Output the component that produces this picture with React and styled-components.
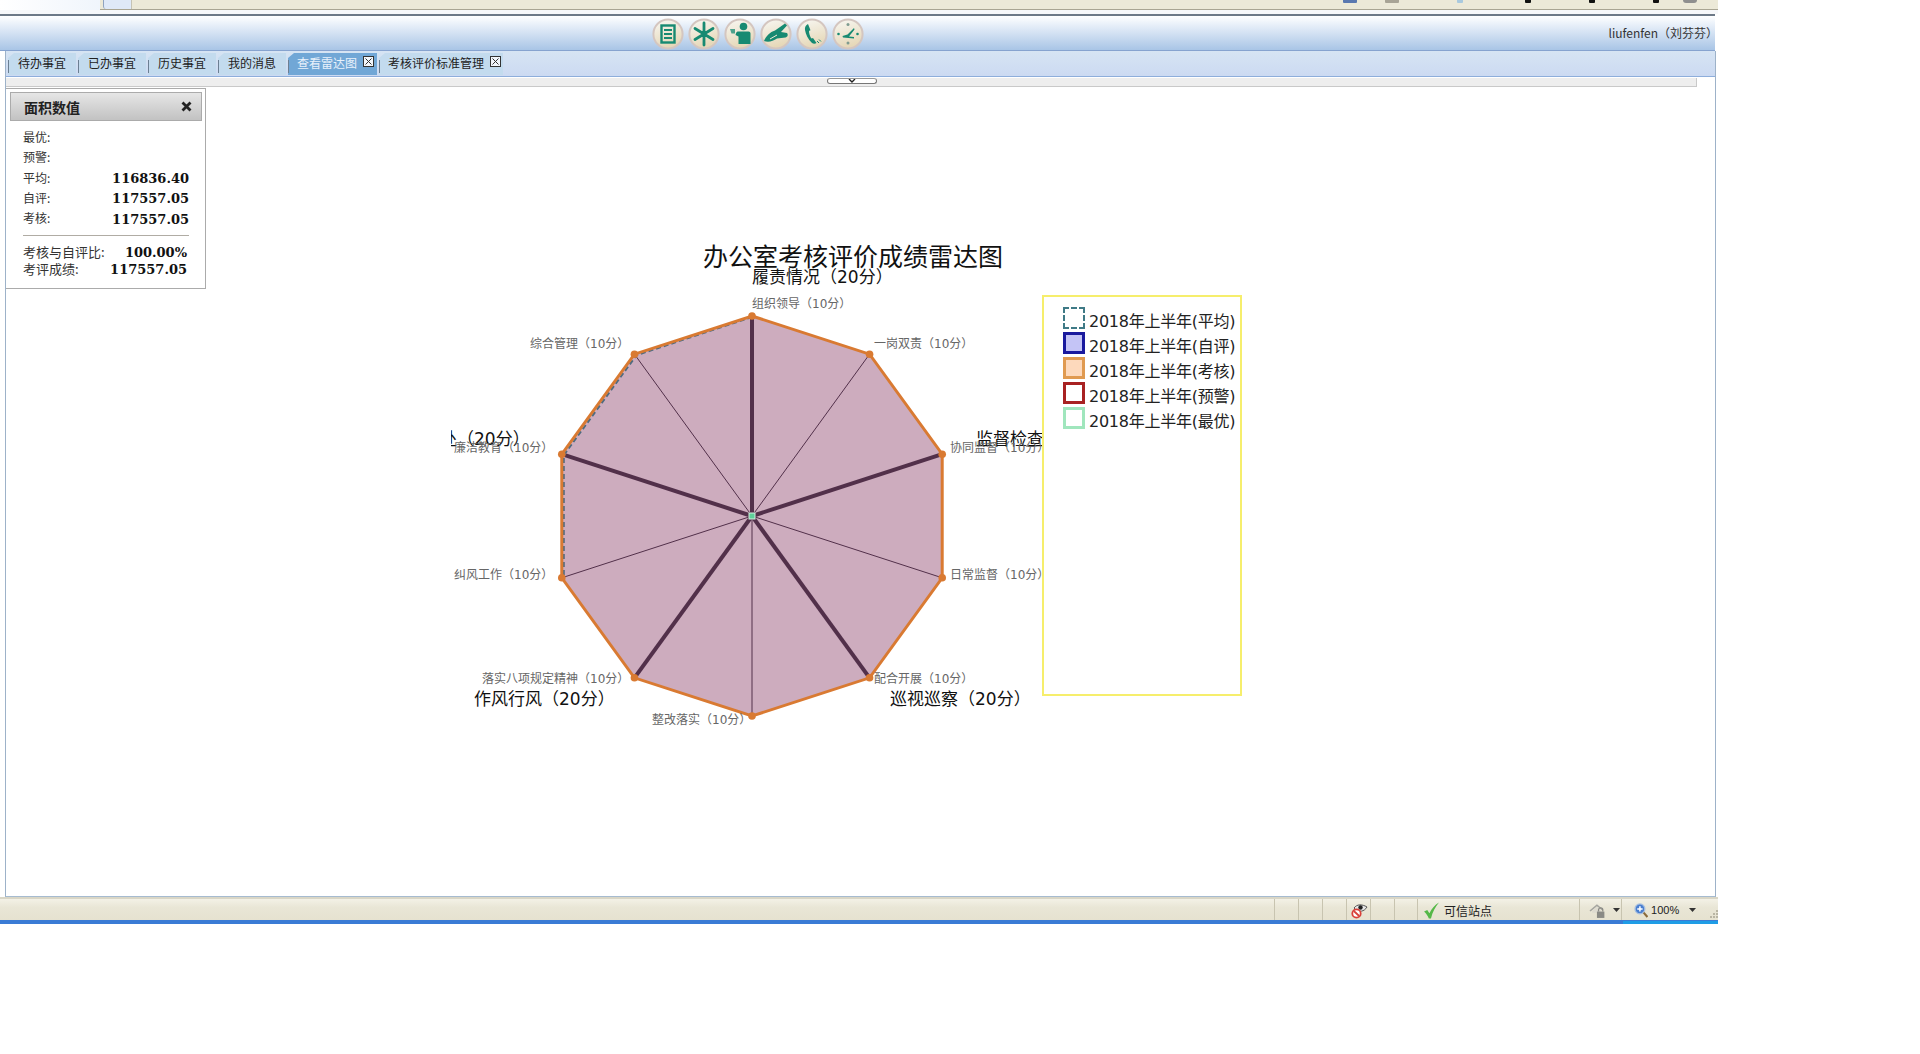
import React from "react";
import styled, { createGlobalStyle } from "styled-components";

const Global = createGlobalStyle`
  html, body { margin: 0; padding: 0; background: #fff; }
  body { font-family: "Noto Sans CJK SC", "Liberation Sans", sans-serif; font-size: 12px; color: #222; }
`;

const Page = styled.div`
  width: 1718px;
  height: 924px;
  display: flex;
  flex-direction: column;
  background: #fff;
`;

const TopStrip = styled.div`
  height: 9px;
  display: flex;
  background: #ece9d8;
  border-bottom: 1px solid #a9a593;
`;
const StripBlank = styled.div`
  width: 100px;
  height: 10px;
  background: linear-gradient(90deg, #fff, #f0f5fc);
`;
const StripTab = styled.div`
  width: 27px;
  height: 9px;
  margin-left: 3px;
  background: #dfe9f8;
  border-left: 1px solid #8fa3c0;
  border-right: 1px solid #c5c3b5;
  border-radius: 0 0 0 3px;
`;
const StripGlyph = styled.div`
  width: ${(p) => p.$w}px;
  height: 3px;
  margin-left: ${(p) => p.$gap}px;
  background: ${(p) => p.$c};
  border-radius: 0 0 ${(p) => (p.$round ? 7 : 1)}px ${(p) => (p.$round ? 7 : 1)}px;
`;
const StripGap = styled.div`
  height: 4px;
  background: #f7f8fa;
`;

const Toolbar = styled.div`
  height: 34px;
  margin-right: 3px;
  padding-left: 652px;
  display: flex;
  align-items: center;
  border-top: 2px solid #6d7987;
  border-bottom: 1px solid #86a3cf;
  background: linear-gradient(180deg, #ffffff 0%, #e4edf8 30%, #a9c5e6 100%);
`;
const ToolIcons = styled.div`
  display: flex;
  gap: 4px;
  margin-top: 2px;
`;
const UserName = styled.div`
  margin-left: auto;
  margin-right: -3px;
  margin-top: -1px;
  font-size: 12px;
  color: #333;
  white-space: nowrap;
`;

const Frame = styled.div`
  flex: 1;
  min-height: 0;
  margin-right: 2px;
  display: flex;
  flex-direction: column;
  border-left: 1px solid #9db2c9;
  border-right: 1px solid #9db2c9;
  border-bottom: 1px solid #a6bbd0;
  margin-left: 5px;
`;

const TabBar = styled.div`
  height: 23px;
  padding: 2px 0 0 2px;
  display: flex;
  gap: 2px;
  background: linear-gradient(180deg, #d6e4f3, #ccdaf2);
  border-bottom: 1px solid #8eaedb;
`;
const Tab = styled.div`
  position: relative;
  box-sizing: border-box;
  height: 22px;
  padding: 0 0 3px ${(p) => (p.$close ? 9 : 10)}px;
  width: ${(p) => p.$w}px;
  display: flex;
  align-items: center;
  font-size: 12px;
  color: ${(p) => (p.$active ? "#e8f1fb" : "#222")};
  background: ${(p) => (p.$active ? "#71a7d6" : "#c3dbee")};
  clip-path: polygon(6px 0, 100% 0, 100% 100%, 0 100%, 0 5px);
  &::before {
    content: "";
    position: absolute;
    left: 0;
    top: 7px;
    bottom: 2px;
    width: 1px;
    background: #6c7f92;
  }
`;
const TabClose = styled.svg`
  width: 11px;
  height: 11px;
  margin-left: 6px;
  margin-top: -2px;
  flex: none;
`;

const CollapseBar = styled.div`
  position: relative;
  height: 8px;
  margin-top: 1px;
  margin-right: 18px;
  background: #eeeeee;
  border-bottom: 1px solid #c9c9c9;
  border-right: 1px solid #c9c9c9;
`;
const Grabber = styled.div`
  position: absolute;
  left: 821px;
  top: 0;
  width: 48px;
  height: 4px;
  background: #fff;
  border: 1px solid #777;
  border-top-color: #999;
  border-radius: 3px;
  display: flex;
  justify-content: center;
`;

const Content = styled.div`
  flex: 1;
  min-height: 0;
  display: flex;
  align-items: flex-start;
  background: #fff;
`;

const Panel = styled.div`
  flex: none;
  box-sizing: border-box;
  width: 200px;
  height: 201px;
  margin-top: 1px;
  padding: 3px 3px 0 4px;
  border: 1px solid #ababab;
  border-left: none;
  background: #fff;
`;
const PanelHead = styled.div`
  box-sizing: border-box;
  height: 29px;
  padding: 0 9px 0 13px;
  display: flex;
  align-items: center;
  justify-content: space-between;
  background: linear-gradient(180deg, #e6e6e6, #c2c2c2);
  border: 1px solid #ababab;
  font-size: 14px;
  font-weight: 700;
  color: #222;
`;
const PanelBody = styled.div`
  padding: 7px 13px 0 13px;
`;
const Row = styled.div`
  height: ${(p) => (p.$tight ? 17 : 20.25)}px;
  padding-right: ${(p) => (p.$tight ? 2 : 0)}px;
  display: flex;
  align-items: center;
  justify-content: space-between;
  font-size: ${(p) => (p.$tight ? 13 : 12)}px;
  color: #333;
`;
const RowLabel = styled.span`
  margin-top: -3px;
`;
const Val = styled.span`
  font-family: "DejaVu Serif", "Liberation Serif", serif;
  font-weight: 700;
  font-size: 13px;
  color: #111;
`;
const Rule = styled.div`
  height: 1px;
  margin: 6px 0 8px;
  background: #b0aca4;
`;

const ChartSvg = styled.svg`
  flex: none;
  display: block;
  width: 591px;
  height: 500px;
  margin: 154px 0 0 245px;
  overflow: hidden;
`;
const Legend = styled.div`
  flex: none;
  box-sizing: border-box;
  width: 200px;
  height: 401px;
  margin: 208px 0 0 0;
  padding: 10px 0 0 19px;
  border: 2px solid #f6ee6c;
  display: flex;
  flex-direction: column;
`;
const LegendRow = styled.div`
  height: 25px;
  display: flex;
  align-items: flex-start;
  gap: 4px;
`;
const Swatch = styled.div`
  box-sizing: border-box;
  width: 22px;
  height: 22px;
  flex: none;
  border: ${(p) => (p.$dash ? 2 : 3)}px ${(p) => (p.$dash ? "dashed" : "solid")} ${(p) => p.$line};
  background: ${(p) => p.$fill};
`;
const LegendText = styled.span`
  margin-top: 4px;
  font-family: "DejaVu Sans", "Noto Sans CJK SC", sans-serif;
  font-size: 16px;
  line-height: 22px;
  letter-spacing: -0.25px;
  color: #222;
  white-space: nowrap;
`;

const StatusBar = styled.div`
  height: 23px;
  margin-top: 0;
  box-sizing: border-box;
  display: flex;
  align-items: stretch;
  background: linear-gradient(180deg, #f3f1e6, #e9e6d6 40%, #e6e2d0);
  border-top: 2px solid #d9d6c6;
  font-size: 12px;
  color: #222;
`;
const Cell = styled.div`
  box-sizing: border-box;
  width: ${(p) => p.$w}px;
  flex: ${(p) => (p.$grow ? 1 : "none")};
  display: flex;
  align-items: center;
  gap: ${(p) => p.$gap || 0}px;
  padding-left: ${(p) => p.$pad || 0}px;
  padding-top: 1px;
  border-right: ${(p) => (p.$plain ? "none" : "1px solid #c8c4b0")};
  white-space: nowrap;
`;
const BlueLine = styled.div`
  height: 4px;
  display: flex;
  background: #3a7bd5;
`;
const BlueRight = styled.div`
  margin-left: 1623px;
  flex: 1;
  margin-top: 1px;
  background: #1f9de6;
`;
const ZoomLabel = styled.span`
  font-family: "Liberation Sans", sans-serif;
  font-size: 11px;
  color: #222;
`;
const ZoomCaret = styled.svg`
  margin-left: 10px;
  flex: none;
`;
const Grip = styled.svg`
  margin-left: auto;
  align-self: flex-end;
  flex: none;
`;

const TEAL = "#178a72";

const IconBase = ({ id, children }) => (
  <svg width="32" height="32" viewBox="0 0 32 32">
    <defs>
      <linearGradient id={id} x1="0" y1="0" x2="0.3" y2="1">
        <stop offset="0" stopColor="#f8f8f4" />
        <stop offset="1" stopColor="#e6d8b8" />
      </linearGradient>
    </defs>
    <circle cx="16" cy="16" r="14.6" fill={`url(#${id})`} stroke="#d4c6c0" strokeWidth="2" />
    {children}
  </svg>
);

const ToolGlyphs = [
  <IconBase id="g1" key="1">
    <rect x="9.5" y="7.5" width="13" height="17" fill="none" stroke={TEAL} strokeWidth="2.4" />
    <path d="M12 12h8M12 16h8M12 20h8" stroke={TEAL} strokeWidth="1.8" />
  </IconBase>,
  <IconBase id="g2" key="2">
    <path d="M16 16V5M16 16v11M16 16l-9-5.500M16 16l9-5.500M16 16l-9 5.500M16 16l9 5.500" stroke={TEAL} strokeWidth="2.800" strokeLinecap="round" />
    <circle cx="16" cy="16" r="2.600" fill={TEAL} />
  </IconBase>,
  <IconBase id="g3" key="3">
    <circle cx="19.500" cy="8.500" r="3.800" fill={TEAL} />
    <path d="M13.500 13.500h11c1.200 0 2 .8 2 2V26H14.500v-7.500l-3-1.500.8-2.500z" fill={TEAL} />
    <path d="M6 11h5v4.500H7.500z" fill={TEAL} opacity=".75" />
  </IconBase>,
  <IconBase id="g4" key="4">
    <path d="M4 23c2-5 6-9 11-10.500L25 5.500l2 2-6 6.500 6 1c1.500 2 .5 4-1.500 4.500L17 20.500c-4 3-9 4-13 2.500z" fill={TEAL} />
    <path d="M10 21l7-4" stroke="#f3ecd8" strokeWidth="1" />
  </IconBase>,
  <IconBase id="g5" key="5">
    <path d="M12 6c-2 1-3.500 3-3 6 .7 4.500 3 9 7 13 1.500 1 3 1 4.500 0l-3.500-5c-1 .5-1.500.5-2 0-1-2-2-4.500-2-6.500 0-.7.5-1 1.500-1.200z" fill={TEAL} />
    <path d="M21 23l2 2M23 21.500l2 2" stroke={TEAL} strokeWidth="1" />
  </IconBase>,
  <IconBase id="g6" key="6">
    <circle cx="16" cy="6.500" r="1.500" fill="#7f9c90" />
    <circle cx="16" cy="25" r="1.500" fill="#7f9c90" />
    <circle cx="6.500" cy="16" r="1.300" fill={TEAL} />
    <circle cx="25.500" cy="16" r="1.300" fill={TEAL} />
    <path d="M10.500 18l5-1.500L22 10l.5 1.500L17 18.500l5 .5v1.500l-11-1z" fill={TEAL} />
  </IconBase>,
];

const CloseBox = () => (
  <TabClose viewBox="0 0 11 11">
    <rect x="0.5" y="0.5" width="10" height="10" fill="#f2f6fb" stroke="#333" />
    <path d="M2.500 2.500l6 6M8.500 2.500l-6 6" stroke="#333" strokeWidth="1" />
  </TabClose>
);

const CX = 752;
const CY = 515;
const R = 200;
const pts = Array.from({ length: 10 }, (_, i) => {
  const a = (i * 36 * Math.PI) / 180;
  return [CX + R * Math.sin(a), CY - R * Math.cos(a)];
});
const polyStr = pts.map((p) => p.join(",")).join(" ");
const dashPts = [pts[0], pts[9], pts[8], pts[7]]
  .map((p, i) => [p[0] + (i === 0 ? 0 : 2), p[1] + 1].join(","))
  .join(" ");

const smallLabels = [
  ["组织领导（10分）", 752, 303],
  ["一岗双责（10分）", 874, 343],
  ["协同监督（10分）", 950, 447],
  ["日常监督（10分）", 950, 574],
  ["配合开展（10分）", 874, 678],
  ["整改落实（10分）", 652, 719],
  ["落实八项规定精神（10分）", 482, 678],
  ["纠风工作（10分）", 454, 574],
  ["廉洁教育（10分）", 454, 447],
  ["综合管理（10分）", 530, 343],
];
const groupLabels = [
  ["履责情况（20分）", 752, 275.5],
  ["监督检查（20分）", 976, 438],
  ["巡视巡察（20分）", 890, 698],
  ["作风行风（20分）", 474, 698],
  ["违纪查处（20分）", 389, 438],
];

const FONT = `"DejaVu Sans", "Noto Sans CJK SC", sans-serif`;

const Radar = () => (
  <ChartSvg viewBox="451 240 591 500">
    <polygon points={polyStr} fill="#cdacbe" stroke="none" />
    {pts.map((p, i) => (
      <line
        key={i}
        x1={CX}
        y1={CY}
        x2={p[0]}
        y2={p[1]}
        stroke="#52304a"
        strokeWidth={i % 2 === 0 ? 4 : 1}
      />
    ))}
    <polyline points={dashPts} fill="none" stroke="#4f6b80" strokeWidth="2" strokeDasharray="5 3" />
    <polygon points={polyStr} fill="none" stroke="#d97a32" strokeWidth="3" />
    {pts.map((p, i) => (
      <circle key={i} cx={p[0]} cy={p[1]} r="3.800" fill="#d97a32" />
    ))}
    <rect x={CX - 3} y={CY - 3} width="6" height="6" fill="#5fd09a" stroke="#d6efe2" strokeWidth="1" />
    <text x="703" y="256" dominantBaseline="central" fontFamily={FONT} fontSize="25" fill="#111">
      办公室考核评价成绩雷达图
    </text>
    {groupLabels.map(([t, x, y]) => (
      <text key={t} x={x} y={y} dominantBaseline="central" fontFamily={FONT} fontSize="17" fill="#111">
        {t}
      </text>
    ))}
    {smallLabels.map(([t, x, y]) => (
      <text key={t} x={x} y={y} dominantBaseline="central" fontFamily={FONT} fontSize="12" fill="#666">
        {t}
      </text>
    ))}
  </ChartSvg>
);

const legendItems = [
  ["2018年上半年(平均)", "#3f7a86", "#fff", true],
  ["2018年上半年(自评)", "#1a1a9e", "#c4c4f6", false],
  ["2018年上半年(考核)", "#e09a50", "#fdd9bc", false],
  ["2018年上半年(预警)", "#a82222", "#fff", false],
  ["2018年上半年(最优)", "#a0e6bd", "#fff", false],
];

const scores = [
  ["最优:", ""],
  ["预警:", ""],
  ["平均:", "116836.40"],
  ["自评:", "117557.05"],
  ["考核:", "117557.05"],
];

const tabs = [
  ["待办事宜", 68],
  ["已办事宜", 68],
  ["历史事宜", 68],
  ["我的消息", 68],
  ["查看雷达图", 89, true, true],
  ["考核评价标准管理", 124, false, true],
];

export default function App() {
  return (
    <>
      <Global />
      <Page>
        <TopStrip>
          <StripBlank />
          <StripTab />
          <StripGlyph $w={14} $gap={1211} $c="#5a78b0" />
          <StripGlyph $w={14} $gap={28} $c="#a8a496" />
          <StripGlyph $w={6} $gap={58} $c="#a9c9de" />
          <StripGlyph $w={6} $gap={62} $c="#111" />
          <StripGlyph $w={6} $gap={58} $c="#111" />
          <StripGlyph $w={6} $gap={58} $c="#111" />
          <StripGlyph $w={14} $gap={24} $c="#8f8f8f" $round />
        </TopStrip>
        <StripGap />
        <Toolbar>
          <ToolIcons>{ToolGlyphs}</ToolIcons>
          <UserName>liufenfen（刘芬芬）</UserName>
        </Toolbar>
        <Frame>
          <TabBar>
            {tabs.map(([t, w, active, close]) => (
              <Tab key={t} $w={w} $active={active} $close={close}>
                {t}
                {close && <CloseBox />}
              </Tab>
            ))}
          </TabBar>
          <CollapseBar>
            <Grabber>
              <svg width="8" height="4" viewBox="0 0 8 4">
                <path d="M1 0l3 3 3-3" fill="none" stroke="#222" strokeWidth="1.400" />
              </svg>
            </Grabber>
          </CollapseBar>
          <Content>
            <Panel>
              <PanelHead>
                面积数值
                <svg width="11" height="11" viewBox="0 0 11 11">
                  <path d="M1.500 1.500l8 8M9.500 1.500l-8 8" stroke="#222" strokeWidth="2.800" />
                </svg>
              </PanelHead>
              <PanelBody>
                {scores.map(([l, v]) => (
                  <Row key={l}>
                    <RowLabel>{l}</RowLabel>
                    <Val>{v}</Val>
                  </Row>
                ))}
                <Rule />
                <Row $tight>
                  <RowLabel>考核与自评比:</RowLabel>
                  <Val>100.00%</Val>
                </Row>
                <Row $tight>
                  <RowLabel>考评成绩:</RowLabel>
                  <Val>117557.05</Val>
                </Row>
              </PanelBody>
            </Panel>
            <Radar />
            <Legend>
              {legendItems.map(([t, line, fill, dash]) => (
                <LegendRow key={t}>
                  <Swatch $line={line} $fill={fill} $dash={dash} />
                  <LegendText>{t}</LegendText>
                </LegendRow>
              ))}
            </Legend>
          </Content>
        </Frame>
        <StatusBar>
          <Cell $w={1275} />
          <Cell $w={24} />
          <Cell $w={24} />
          <Cell $w={24} />
          <Cell $w={24} $pad={4}>
            <svg width="17" height="17" viewBox="0 0 17 17">
              <path d="M3 6c3-4 8-4 13-1-3 5-8 5-11 3z" fill="#e8e8e8" stroke="#555" strokeWidth="1" />
              <circle cx="9.500" cy="5.500" r="2.200" fill="#222" />
              <circle cx="5.500" cy="11.500" r="4.200" fill="#fff" stroke="#d9403a" strokeWidth="1.800" />
              <path d="M2.800 9l5.400 5" stroke="#d9403a" strokeWidth="1.800" />
            </svg>
          </Cell>
          <Cell $w={24} />
          <Cell $w={23} />
          <Cell $w={162} $pad={5} $gap={4}>
            <svg width="17" height="17" viewBox="0 0 16 16">
              <path d="M1 9l3-1.500 2 3C8.500 6 11 3 15 .5c-3.500 4-6 9-7.500 15H5.500C4.500 13 3 11 1 9z" fill="#55b848" />
            </svg>
            可信站点
          </Cell>
          <Cell $w={42} $pad={8} $gap={5}>
            <svg width="20" height="17" viewBox="0 0 18 16">
              <path d="M1 8l7-6 6 5-1 1-5-4-6 5z" fill="#a5a5a0" />
              <path d="M3.500 8.500L8 4.500l4 3.500v2H3.500z" fill="#dedbd0" />
              <rect x="8" y="9" width="7" height="6" fill="#8a8a85" />
              <path d="M9.500 9V7.500a2 2 0 0 1 4 0V9" fill="none" stroke="#8a8a85" strokeWidth="1.200" />
            </svg>
            <svg width="7" height="4" viewBox="0 0 7 4">
              <path d="M0 0h7L3.500 4z" fill="#333" />
            </svg>
          </Cell>
          <Cell $grow $plain $pad={12}>
            <svg width="14" height="15" viewBox="0 0 13 14">
              <circle cx="5.500" cy="5.500" r="4.600" fill="#4a7fd0" stroke="#a8c0e0" strokeWidth="1.200" />
              <path d="M3 5.500h5M5.500 3v5" stroke="#fff" strokeWidth="1.400" />
              <path d="M9 9l3.500 4" stroke="#8a6a3a" strokeWidth="2" />
            </svg>
            <ZoomLabel>&nbsp;100%</ZoomLabel>
            <ZoomCaret width="7" height="4" viewBox="0 0 7 4">
              <path d="M0 0h7L3.500 4z" fill="#333" />
            </ZoomCaret>
            <Grip width="10" height="10" viewBox="0 0 10 10">
              <path d="M8 0h2v2H8zM5 3h2v2H5zM8 3h2v2H8zM2 6h2v2H2zM5 6h2v2H5zM8 6h2v2H8z" fill="#b9b5a4" />
            </Grip>
          </Cell>
        </StatusBar>
        <BlueLine>
          <BlueRight />
        </BlueLine>
      </Page>
    </>
  );
}
